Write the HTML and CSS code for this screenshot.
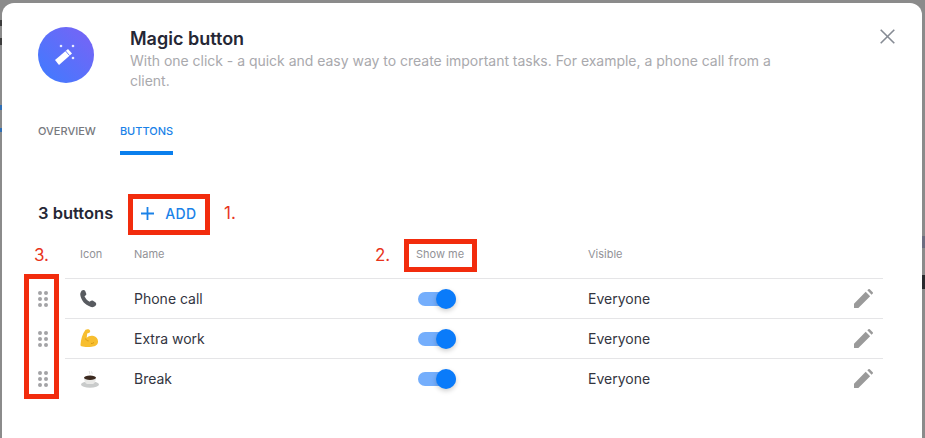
FILE: index.html
```html
<!DOCTYPE html>
<html lang="en">
<head>
<meta charset="utf-8">
<title>Magic button</title>
<link rel="stylesheet" href="styles.css">
</head>
<body>
<div class="modal">
  <button class="close" aria-label="Close">
    <svg width="15" height="15" viewBox="0 0 15 15"><path d="M.7.7l13.600 13.600M14.300.7L.7 14.300" stroke="#868b94" stroke-width="1.600" fill="none"/></svg>
  </button>
  <header class="head">
    <div class="logo">
      <svg width="28" height="28" viewBox="0 0 28 28"><path d="M3 19L16 8l4 4.500L7 24z" fill="#fff"/><path d="M13.600 10l4 4.600" stroke="#5a72fa" stroke-width=".9" fill="none"/><circle cx="9" cy="5" r="1.300" fill="#fff" opacity=".85"/><circle cx="21" cy="5" r="1.300" fill="#fff" opacity=".85"/><circle cx="21" cy="17" r="1.300" fill="#fff" opacity=".85"/></svg>
    </div>
    <div class="intro">
      <h1 class="title">Magic button</h1>
      <p class="desc">With one click - a quick and easy way to create important tasks. For example, a phone call from a client.</p>
    </div>
  </header>
  <nav class="tabs">
    <a class="tab">OVERVIEW</a>
    <a class="tab active">BUTTONS</a>
  </nav>
  <div class="toolbar">
    <span class="count">3 buttons</span>
    <a class="add">
      <svg width="15" height="15" viewBox="0 0 15 15"><path d="M7.500 1v13M1 7.500h13" stroke="#1a82e8" stroke-width="1.800" fill="none"/></svg>
      <span>ADD</span>
    </a>
  </div>
  <div class="table">
    <div class="row headrow">
      <span class="c-icon">Icon</span>
      <span class="c-name">Name</span>
      <span class="c-show">Show me</span>
      <span class="c-vis">Visible</span>
      <span class="c-edit"></span>
    </div>
    <div class="row">
      <span class="c-icon">
        <svg class="emoji" width="20" height="20" viewBox="0 0 20 20"><path d="M1.500 1.800C2.900.6 4.600.7 5.200 2l1 2.400c.3.900 0 1.600-.8 2.200l-.9.700c.9 2.200 2.800 4.300 5.200 5.500l.9-.8c.8-.6 1.600-.7 2.400-.2l2.300 1.400c1.200.8 1.300 2.400.2 3.500-1.300 1.300-3 1.900-5 1.100C4.800 15.800 1.200 11.600.3 6.100 0 4.400.9 2.900 1.500 1.800z" fill="#585b60"/></svg>
      </span>
      <span class="c-name">Phone call</span>
      <span class="c-show"><span class="toggle"><span class="knob"></span></span></span>
      <span class="c-vis">Everyone</span>
      <span class="c-edit"><svg width="19" height="19" viewBox="0 0 20 20"><path d="M0 20v-4.600L12.300 3l4.700 4.700L4.600 20zM14 1.400L15.200.3a1 1 0 0 1 1.400 0l3.100 3.100a1 1 0 0 1 0 1.400L18.500 6z" fill="#9a9a9a"/></svg></span>
    </div>
    <div class="row">
      <span class="c-icon">
        <svg class="emoji" width="20" height="20" viewBox="0 0 20 20"><path d="M5.500.8C7.200-.1 9.400.2 10 1.500c.5 1.100-.1 2.200-1.300 2.500l-1.500.4-.5 4.300c1.700-1.800 4.500-2.600 7-1.700 2.700.9 4.600 3.200 4.300 6-.2 2.900-2.900 4.500-6.200 4.800-3.500.3-7.600.4-10.400-.5-.7-.2-1-.7-.9-1.500C1 10.700 2.100 5 5.500.8z" fill="#f7be2f"/><path d="M5.600 9.500c.3 1.500 1.400 2.300 3 2.400M14 13.500c-.9.800-1.800 1.100-3 1" stroke="#d49410" stroke-width=".9" fill="none"/></svg>
      </span>
      <span class="c-name">Extra work</span>
      <span class="c-show"><span class="toggle"><span class="knob"></span></span></span>
      <span class="c-vis">Everyone</span>
      <span class="c-edit"><svg width="19" height="19" viewBox="0 0 20 20"><path d="M0 20v-4.600L12.300 3l4.700 4.700L4.600 20zM14 1.400L15.200.3a1 1 0 0 1 1.400 0l3.100 3.100a1 1 0 0 1 0 1.400L18.500 6z" fill="#9a9a9a"/></svg></span>
    </div>
    <div class="row">
      <span class="c-icon">
        <svg class="emoji" width="20" height="20" viewBox="0 0 20 20"><ellipse cx="10" cy="15.500" rx="9" ry="3.200" fill="#c9cbcb"/><path d="M4 8.500h12c0 4-1.800 6.500-3.500 6.500h-5C5.800 15 4 12.500 4 8.500z" fill="#e9e9e7"/><ellipse cx="10" cy="8.800" rx="6" ry="2.200" fill="#3c2a20"/><path d="M9 2c1 1 .2 2 1 3M11.500 2.500c.7.800.1 1.500.7 2.300" stroke="#cfcfcf" stroke-width=".7" fill="none"/></svg>
      </span>
      <span class="c-name">Break</span>
      <span class="c-show"><span class="toggle"><span class="knob"></span></span></span>
      <span class="c-vis">Everyone</span>
      <span class="c-edit"><svg width="19" height="19" viewBox="0 0 20 20"><path d="M0 20v-4.600L12.300 3l4.700 4.700L4.600 20zM14 1.400L15.200.3a1 1 0 0 1 1.400 0l3.100 3.100a1 1 0 0 1 0 1.400L18.500 6z" fill="#9a9a9a"/></svg></span>
    </div>
    <div class="grips">
      <span class="grip"><i></i><i></i><i></i><i></i><i></i><i></i></span>
      <span class="grip"><i></i><i></i><i></i><i></i><i></i><i></i></span>
      <span class="grip"><i></i><i></i><i></i><i></i><i></i><i></i></span>
    </div>
  </div>
  <span class="mark box-add"></span>
  <span class="mark box-show"></span>
  <span class="mark box-grip"></span>
  <span class="num num1">1.</span>
  <span class="num num2">2.</span>
  <span class="num num3">3.</span>
</div>
</body>
</html>
```
FILE: styles.css
```css
* { box-sizing: border-box; }
html, body { height: 100%; }
body {
  margin: 0;
  overflow: hidden;
  background-color: #8b8b8b;
  background-image:
    linear-gradient(#2a2a2e, #2a2a2e),
    linear-gradient(#6d6d80, #6d6d80),
    linear-gradient(#2f6fb5, #2f6fb5),
    linear-gradient(#2f6fb5, #2f6fb5),
    linear-gradient(#3d3d3d, #3d3d3d),
    linear-gradient(#3d3d3d, #3d3d3d);
  background-size: 3px 14px, 3px 12px, 2px 5px, 2px 4px, 2px 6px, 2px 7px;
  background-position: 922px 275px, 922px 236px, 0 105px, 0 128px, 0 20px, 0 38px;
  background-repeat: no-repeat;
  font-family: Inter, "Liberation Sans", sans-serif;
  color: #252735;
}
.modal {
  position: relative;
  height: 435px;
  margin: 3px 3px 0 2px;
  padding: 24px 39px 0 36px;
  background: #fff;
  border-radius: 12px 12px 0 0;
}
.close {
  position: absolute;
  top: 26px;
  right: 27px;
  width: 15px;
  height: 15px;
  padding: 0;
  border: 0;
  background: none;
  display: flex;
}
.head { display: flex; gap: 36px; }
.logo {
  flex: none;
  width: 56px;
  height: 56px;
  border-radius: 50%;
  background: linear-gradient(45deg, #3d7cff, #7b62f5);
  display: flex;
  align-items: center;
  justify-content: center;
}
.intro { width: 660px; padding-top: 2px; }
.title {
  margin: 0;
  font-size: 18px;
  line-height: 20px;
  font-weight: 600;
  color: #252735;
}
.desc {
  margin: 2px 0 0;
  font-size: 14px;
  line-height: 20px;
  letter-spacing: -.02px;
  color: #a9a9ad;
}
.tabs { display: flex; gap: 24px; margin-top: 16px; height: 48px; }
.tab {
  height: 48px;
  padding-top: 17px;
  font-size: 11px;
  line-height: 14px;
  font-weight: 500;
  color: #77797e;
}
.tab.active {
  color: #1a82e8;
  border-bottom: 4px solid #0a7fed;
}
.toolbar { display: flex; align-items: center; gap: 27px; margin-top: 46px; height: 24px; }
.count { font-size: 16.5px; font-weight: 600; color: #252735; }
.add { display: flex; align-items: center; gap: 10px; color: #1a82e8; font-size: 14px; font-weight: 500; letter-spacing: .4px; }
.table { position: relative; margin: 5px 0 0 27px; }
.row {
  display: grid;
  grid-template-columns: 69px 282px 172px 1fr 40px;
  align-items: center;
  height: 40px;
  border-top: 1px solid #e5e5e7;
  font-size: 14px;
  color: #33353f;
}
.headrow {
  height: 48px;
  border-top: 0;
  font-size: 11px;
  color: #929297;
}
.c-icon { padding-left: 15px; display: flex; align-items: center; }
.emoji { display: block; }
.c-show { display: flex; }
.toggle {
  position: relative;
  display: block;
  width: 38px;
  height: 14px;
  border-radius: 7px;
  background: #74aefc;
  margin-left: 2px;
}
.knob {
  position: absolute;
  top: -3px;
  right: 0;
  width: 20px;
  height: 20px;
  border-radius: 50%;
  background: #0a7bfa;
  box-shadow: 0 2px 5px rgba(0, 0, 0, .2);
}
.c-edit { display: flex; justify-content: flex-end; padding-right: 10px; }
.grips {
  position: absolute;
  left: -27px;
  top: 49px;
  width: 10px;
}
.grip {
  display: grid;
  grid-template-columns: 4px 4px;
  gap: 2px;
  height: 40px;
  align-content: center;
}
.grip i { width: 4px; height: 4px; border-radius: 50%; background: #a3a3a6; }
.mark { position: absolute; border: 5px solid #f22c0d; }
.box-add { left: 126px; top: 191px; width: 82px; height: 41px; }
.box-show { left: 402px; top: 236px; width: 73px; height: 33px; }
.box-grip { left: 22px; top: 271px; width: 35px; height: 125px; }
.num { position: absolute; font-size: 17px; line-height: 20px; color: #e8341c; }
.num1 { left: 222px; top: 200px; }
.num2 { left: 373px; top: 242px; }
.num3 { left: 32px; top: 242px; }
```
